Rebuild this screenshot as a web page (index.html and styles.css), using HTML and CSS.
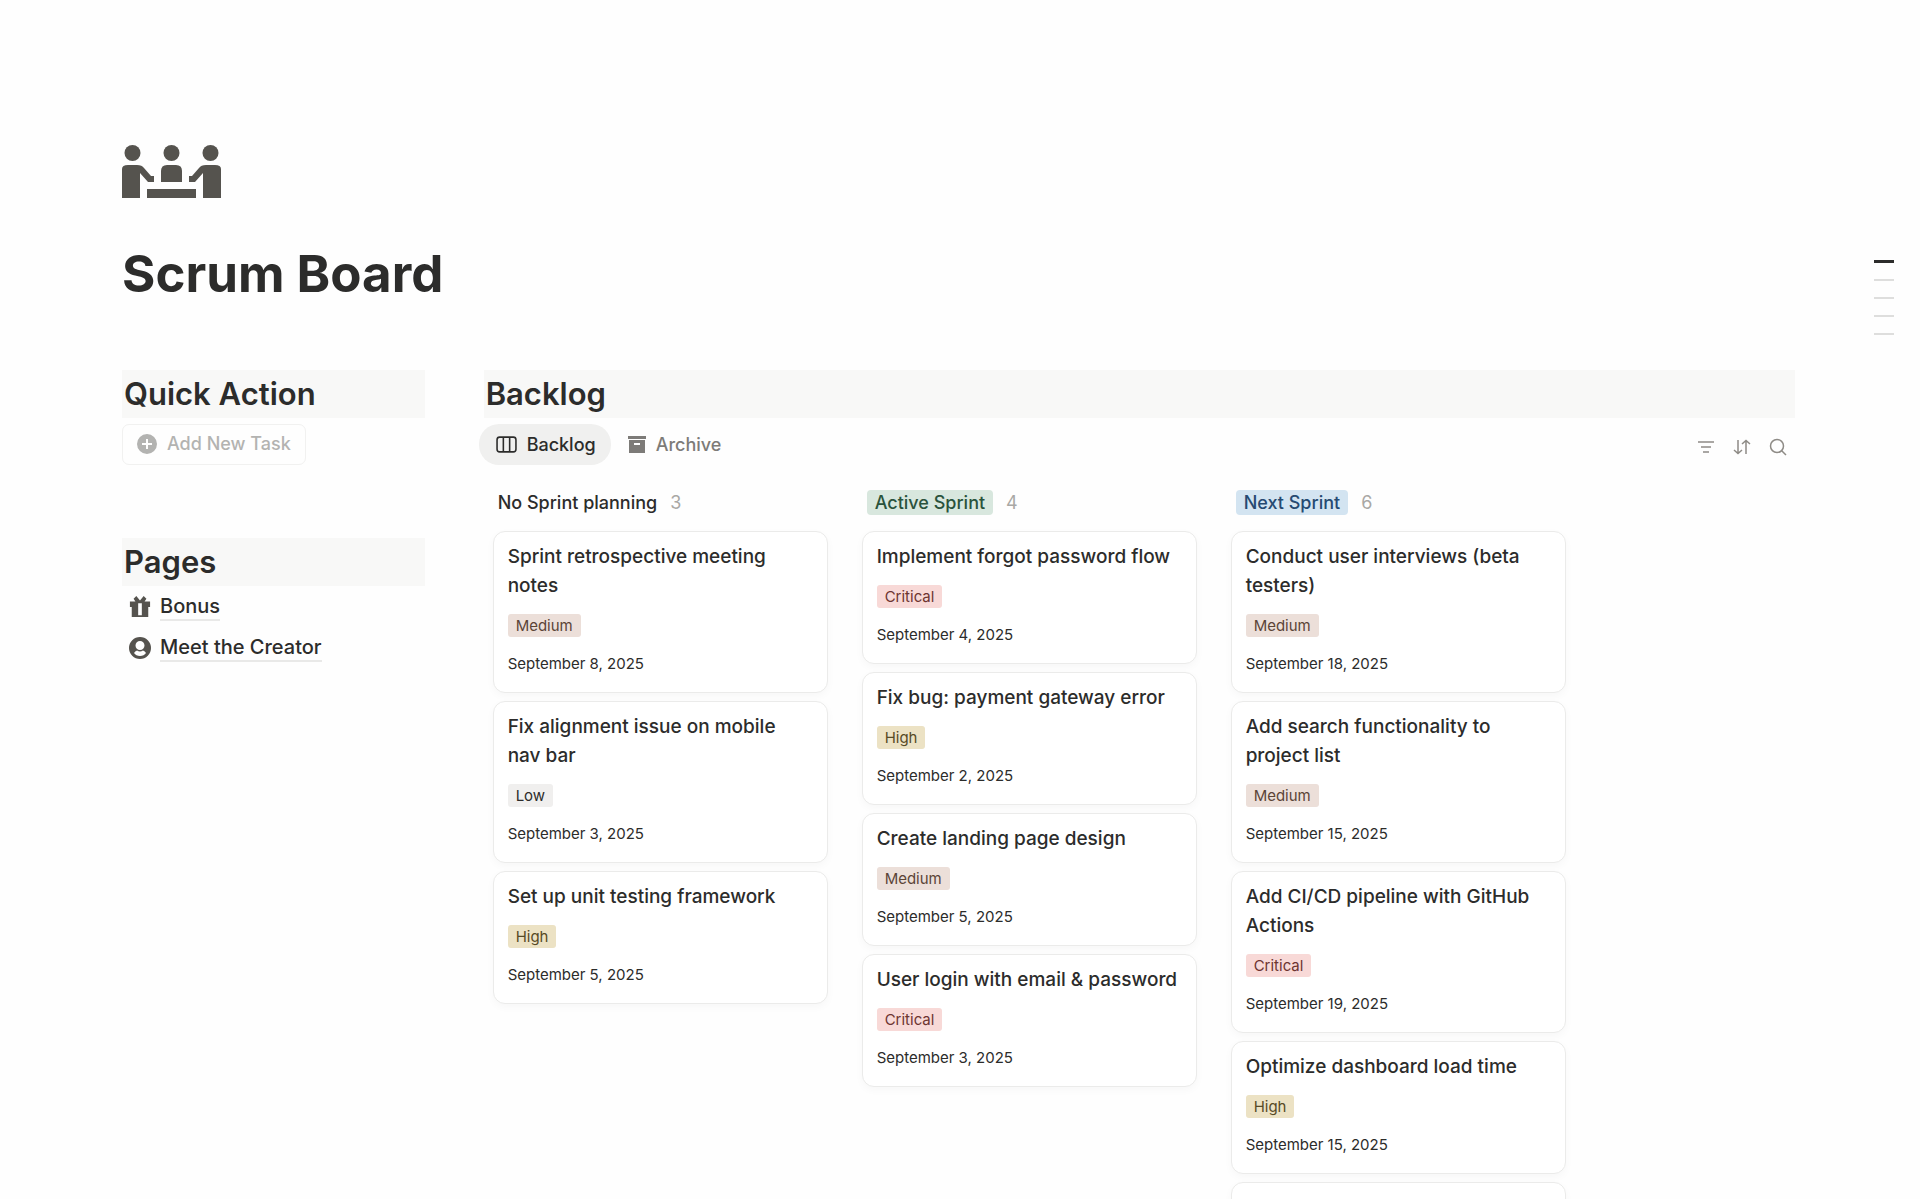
FILE: index.html
```
<!DOCTYPE html>
<html lang="en">
<head>
  <meta charset="UTF-8">
  <title>Scrum Board</title>
  <meta name="viewport" content="width=device-width, initial-scale=1.0">
  <link rel="stylesheet" href="styles.css">
</head>
<body>
  <div class="page">
    <header class="page-header">
      <svg class="page-icon" viewBox="0 0 99 53" aria-hidden="true">
        <circle cx="10.500" cy="8" r="8"/>
        <circle cx="49.500" cy="8" r="8"/>
        <circle cx="88.500" cy="8" r="8"/>
        <path d="M0 53V24Q0 20 6 20H15Q20 20 22 23L29 31H32V37H26L18 28V53Z"/>
        <path d="M99 53V24Q99 20 93 20H84Q79 20 77 23L70 31H67V37H73L81 28V53Z"/>
        <path d="M39 37V26Q39 20 45 20H54Q60 20 60 26V37Z"/>
        <path d="M25 44H74V53H25Z"/>
      </svg>
      <h1>Scrum Board</h1>
    </header>

    <div class="layout">
      <aside class="sidebar">
        <section class="block">
          <h2>Quick Action</h2>
          <button type="button" class="add-task">
            <svg viewBox="0 0 20 20" aria-hidden="true">
              <path fill-rule="evenodd" d="M10 0a10 10 0 1 0 0 20a10 10 0 0 0 0-20ZM9 5h2v4h4v2h-4v4h-2v-4h-4v-2h4Z"/>
            </svg>
            Add New Task
          </button>
        </section>
        <section class="block">
          <h2>Pages</h2>
          <nav class="page-links" aria-label="Pages">
            <a href="#bonus">
              <svg viewBox="0 0 22 24" aria-hidden="true">
                <path fill-rule="evenodd" d="M0 6H6L4 3L7 0L11 5L15 0L18 3L16 6H22V12H20V23H2V12H0ZM9 8V21H13V8Z"/>
              </svg>
              <span>Bonus</span>
            </a>
            <a href="#creator">
              <svg viewBox="0 0 22 22" aria-hidden="true">
                <path fill-rule="evenodd" d="M11 0a11 11 0 1 0 0 22a11 11 0 0 0 0-22ZM11 4a4.500 4.500 0 1 1 0 9a4.500 4.500 0 0 1 0-9ZM5 16Q6 14 8 13.500Q11 15.500 14 13.500Q16 14 17 16Q15 19 11 19Q7 19 5 16Z"/>
              </svg>
              <span>Meet the Creator</span>
            </a>
          </nav>
        </section>
      </aside>

      <main class="main">
        <h2>Backlog</h2>
        <div class="view-bar">
          <div class="tabs">
            <button type="button" class="tab active">
              <svg viewBox="0 0 20 16" aria-hidden="true">
                <rect x="1" y="1" width="18" height="14" rx="2.500" fill="none" stroke="currentColor" stroke-width="1.500"/>
                <path d="M7 1V15M13 1V15" stroke="currentColor" stroke-width="1.500"/>
              </svg>
              Backlog
            </button>
            <button type="button" class="tab">
              <svg class="archive-icon" viewBox="0 0 18 17" aria-hidden="true">
                <path fill-rule="evenodd" d="M0 0H18V3H0ZM1 4H17V17H1ZM6 7V9H12V7Z"/>
              </svg>
              Archive
            </button>
          </div>
          <div class="tools">
            <button type="button" aria-label="Filter">
              <svg viewBox="0 0 18 18"><path d="M1 4H17M4 9H14M6 14H12"/></svg>
            </button>
            <button type="button" aria-label="Sort">
              <svg viewBox="0 0 18 18"><path d="M5 2V15M1 12L5 15.500L9 12M13 16V3M9 6L13 2.500L17 6"/></svg>
            </button>
            <button type="button" aria-label="Search">
              <svg viewBox="0 0 18 18"><circle cx="8" cy="8" r="6.500"/><path d="M12.500 12.500L17 17"/></svg>
            </button>
          </div>
        </div>

        <div class="board">
          <section class="column">
            <h3><span class="status">No Sprint planning</span><span class="count">3</span></h3>
            <article class="card">
              <h4>Sprint retrospective meeting notes</h4>
              <span class="tag medium">Medium</span>
              <time datetime="2025-09-08">September 8, 2025</time>
            </article>
            <article class="card">
              <h4>Fix alignment issue on mobile nav bar</h4>
              <span class="tag low">Low</span>
              <time datetime="2025-09-03">September 3, 2025</time>
            </article>
            <article class="card">
              <h4>Set up unit testing framework</h4>
              <span class="tag high">High</span>
              <time datetime="2025-09-05">September 5, 2025</time>
            </article>
          </section>

          <section class="column">
            <h3><span class="status green">Active Sprint</span><span class="count">4</span></h3>
            <article class="card">
              <h4>Implement forgot password flow</h4>
              <span class="tag critical">Critical</span>
              <time datetime="2025-09-04">September 4, 2025</time>
            </article>
            <article class="card">
              <h4>Fix bug: payment gateway error</h4>
              <span class="tag high">High</span>
              <time datetime="2025-09-02">September 2, 2025</time>
            </article>
            <article class="card">
              <h4>Create landing page design</h4>
              <span class="tag medium">Medium</span>
              <time datetime="2025-09-05">September 5, 2025</time>
            </article>
            <article class="card">
              <h4>User login with email &amp; password</h4>
              <span class="tag critical">Critical</span>
              <time datetime="2025-09-03">September 3, 2025</time>
            </article>
          </section>

          <section class="column">
            <h3><span class="status blue">Next Sprint</span><span class="count">6</span></h3>
            <article class="card">
              <h4>Conduct user interviews (beta testers)</h4>
              <span class="tag medium">Medium</span>
              <time datetime="2025-09-18">September 18, 2025</time>
            </article>
            <article class="card">
              <h4>Add search functionality to project list</h4>
              <span class="tag medium">Medium</span>
              <time datetime="2025-09-15">September 15, 2025</time>
            </article>
            <article class="card">
              <h4>Add CI/CD pipeline with GitHub Actions</h4>
              <span class="tag critical">Critical</span>
              <time datetime="2025-09-19">September 19, 2025</time>
            </article>
            <article class="card">
              <h4>Optimize dashboard load time</h4>
              <span class="tag high">High</span>
              <time datetime="2025-09-15">September 15, 2025</time>
            </article>
            <article class="card"></article>
          </section>
        </div>
      </main>
    </div>
  </div>

  <div class="outline" aria-hidden="true">
    <span class="current"></span>
    <span></span>
    <span></span>
    <span></span>
    <span></span>
  </div>
</body>
</html>
```
FILE: styles.css
```
* {
  box-sizing: border-box;
}
body {
  margin: 0;
  font-family: Inter, "Liberation Sans", sans-serif;
  font-size: 18px;
  color: #2c2c2b;
  background: #fefefe;
}
h1, h2, h3, h4 {
  margin: 0;
}
button {
  font: inherit;
  font-weight: 500;
  border: none;
  background: none;
  padding: 0;
  cursor: pointer;
}
svg {
  display: block;
  flex: none;
  fill: currentColor;
}
.page {
  height: 100vh;
  overflow: hidden auto;
  scrollbar-width: none;
  padding: 145px 125px 0 122px;
}
.page-icon {
  width: 99px;
  height: 53px;
  color: #55534e;
}
h1 {
  margin-top: 44px;
  margin-bottom: 64px;
  font-size: 51px;
  line-height: 64px;
  font-weight: 700;
}
h2 {
  padding: 4px 2px;
  font-size: 31px;
  line-height: 40px;
  font-weight: 600;
  background: #f8f8f7;
}
.layout {
  display: grid;
  grid-template-columns: 3fr 13fr;
  gap: 59px;
}
.sidebar {
  display: flex;
  flex-direction: column;
  gap: 73px;
}

/* sidebar */
.add-task {
  display: flex;
  align-items: center;
  gap: 10px;
  height: 41px;
  margin-top: 6px;
  padding: 0 14px 2px;
  color: #b3b3b1;
  border: 1px solid #f1f1f0;
  border-radius: 7px;
}
.add-task svg {
  width: 20px;
  height: 20px;
}
.page-links a {
  display: flex;
  align-items: center;
  gap: 9px;
  height: 41px;
  padding-left: 7px;
  font-size: 20px;
  line-height: 26px;
  font-weight: 500;
  color: inherit;
  text-decoration: none;
}
.page-links span {
  border-bottom: 2px solid #e9e9e8;
}
.page-links svg {
  width: 22px;
  height: 22px;
  color: #55534e;
}

/* view tabs */
.view-bar {
  display: flex;
  justify-content: space-between;
  align-items: center;
  margin-top: 6px;
}
.tabs {
  display: flex;
  margin-left: -5px;
}
.tab {
  display: flex;
  align-items: center;
  gap: 10px;
  height: 41px;
  padding: 0 15px 0 17px;
  border-radius: 20px;
  color: #7d7b78;
}
.tab.active {
  background: #f0f0ef;
  color: #2c2c2b;
}
.tab svg {
  width: 21px;
  height: 17px;
}
.tab .archive-icon {
  width: 18px;
}
.tools {
  display: flex;
  gap: 18px;
  padding: 4px 8px 0 0;
}
.tools svg {
  width: 18px;
  height: 18px;
  fill: none;
  stroke: #8e8b86;
  stroke-width: 1.500;
}

/* board */
.board {
  display: flex;
  gap: 34px;
  padding: 25px 0 0 9px;
}
.column {
  display: flex;
  flex-direction: column;
  gap: 8px;
  width: 335px;
}
.column h3 {
  display: flex;
  align-items: center;
  gap: 13px;
  height: 25px;
  margin-bottom: 8px;
  padding-left: 5px;
  font-size: 18px;
  line-height: 25px;
  font-weight: 500;
}
.status.green,
.status.blue {
  padding: 0 8px;
  border-radius: 4px;
}
.status.green {
  background: #d8e7de;
  color: #2a533c;
}
.status.blue {
  background: #d3e4f1;
  color: #264a72;
}
.count {
  font-weight: 400;
  color: #a9a8a5;
}
.card {
  display: flex;
  flex-direction: column;
  align-items: flex-start;
  min-height: 133px;
  padding: 10px 14px 16px;
  border: 1px solid #ebebea;
  border-radius: 12px;
  background: #fff;
  box-shadow: 0 3px 8px rgba(0,0,0,0.03);
}
.card h4 {
  font-size: 19px;
  line-height: 29px;
  font-weight: 500;
}
.tag {
  margin-top: 14px;
  padding: 0 8px;
  font-size: 15px;
  line-height: 23px;
  border-radius: 3px;
}
.card time {
  margin-top: 15px;
  font-size: 15px;
  line-height: 24px;
}
.medium {
  background: #ecdfd9;
  color: #5b4437;
}
.low {
  background: #f0efee;
}
.high {
  background: #ece2c4;
  color: #574a26;
}
.critical {
  background: #f8d9d7;
  color: #6d3531;
}

/* page outline marks */
.outline {
  position: fixed;
  top: 260px;
  right: 26px;
  display: flex;
  flex-direction: column;
  gap: 16px;
}
.outline span {
  width: 20px;
  height: 2px;
  background: #dededd;
}
.outline .current {
  height: 3px;
  background: #2c2c2b;
}
```
